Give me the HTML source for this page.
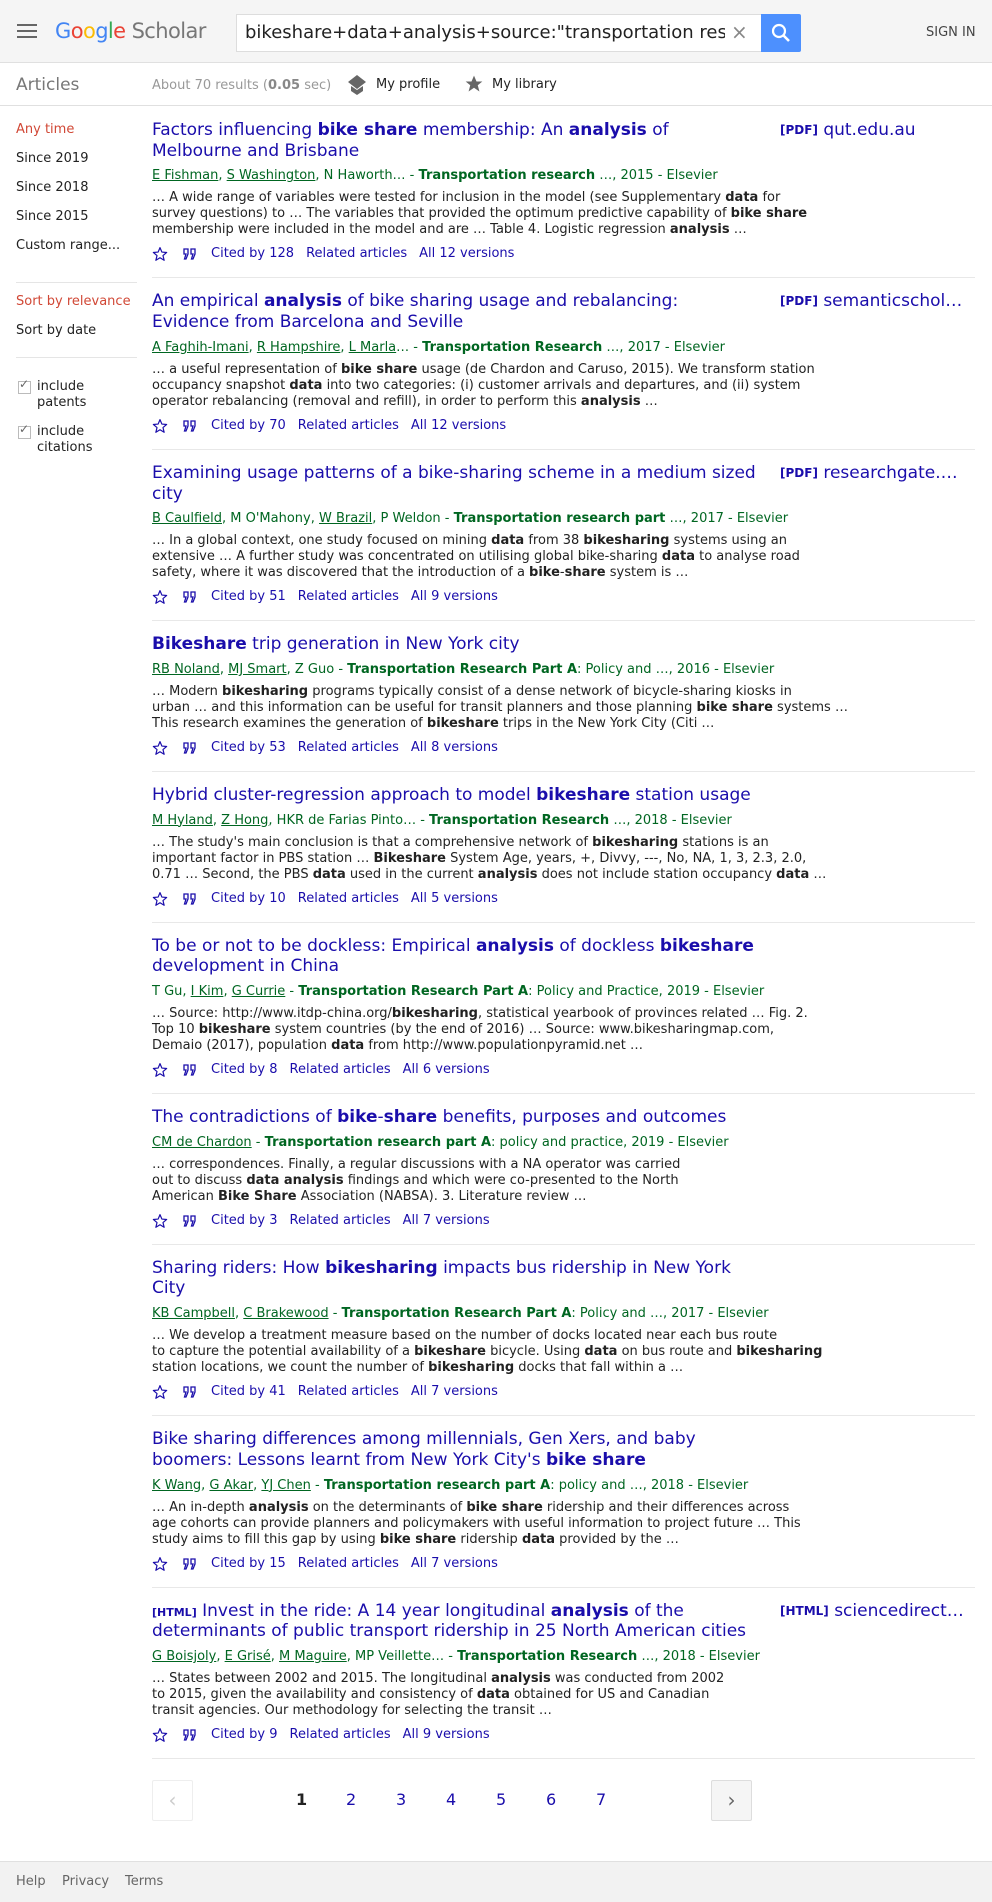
<!DOCTYPE html>
<html><head><meta charset="utf-8">
<style>
*{margin:0;padding:0;box-sizing:border-box}
body{width:992px;height:1902px;position:relative;font-family:"DejaVu Sans","Liberation Sans",sans-serif;background:#fff;color:#222;overflow:hidden}
a{text-decoration:none}
.hdr{position:absolute;left:0;top:0;width:992px;height:63px;background:#f5f5f5;border-bottom:1px solid #e0e0e0}
.ab{position:absolute;white-space:nowrap}
.sub{position:absolute;left:0;top:63px;width:992px;height:43px;border-bottom:1px solid #e0e0e0}
.side{font-size:13px;color:#222}
.main{position:absolute;left:152px;top:107px;width:823px}
.r{padding-top:13px;padding-bottom:13px;border-bottom:1px solid #e8e8e8;position:relative;white-space:nowrap}
.t{font-size:17px;line-height:20.7px;color:#1a0dab}
.t b{font-weight:bold}
.au{font-size:13px;line-height:20px;margin-top:5px;color:#006621}
.au u{text-decoration:underline}
.sn{font-size:13px;line-height:16px;margin-top:4px;color:#222}
.ac{font-size:13px;line-height:20px;margin-top:6px;color:#1a0dab;height:20px;position:relative}
.ac span{margin-right:12px}
.ac svg{position:absolute;top:2px}
.ac .tx{position:absolute;left:59px;top:0}
.pdf{position:absolute;left:628px;top:13px;font-size:17px;line-height:20.7px;color:#1a0dab}
.pdf small{font-size:12px;font-weight:bold;vertical-align:1px}
.tag{font-size:11px;font-weight:bold;color:#1a0dab;line-height:1}
.cb{display:inline-block;width:13px;height:13px;border:1px solid #bbb;position:absolute;left:18px}
</style></head><body>
<div class="hdr">
  <div class="ab" style="left:17px;top:24px;width:20px;height:2px;background:#666;box-shadow:0 6px 0 #666,0 12px 0 #666"></div>
  <div class="ab" style="left:55px;top:16px;font-size:21px;line-height:30px;letter-spacing:-0.6px"><span style="color:#4285f4">G</span><span style="color:#ea4335">o</span><span style="color:#fbbc05">o</span><span style="color:#4285f4">g</span><span style="color:#34a853">l</span><span style="color:#ea4335">e</span> <span style="color:#777">Scholar</span></div>
  <div class="ab" style="left:236px;top:14px;width:526px;height:38px;background:#fff;border:1px solid #ddd;overflow:hidden">
    <div class="ab" style="left:8px;top:7px;font-size:18px;color:#222;width:480px;overflow:hidden">bikeshare+data+analysis+source:"transportation research"</div>
    <div class="ab" style="left:494px;top:5px;font-size:20px;color:#888">×</div>
  </div>
  <div class="ab" style="left:761px;top:14px;width:40px;height:38px;background:#4d90fe;border-radius:0 2px 2px 0">
    <svg width="40" height="38" viewBox="0 0 40 38"><circle cx="18" cy="17" r="6" fill="none" stroke="#fff" stroke-width="2.2"/><line x1="22.5" y1="21.5" x2="28" y2="27" stroke="#fff" stroke-width="2.6"/></svg>
  </div>
  <div class="ab" style="left:926px;top:25px;font-size:13px;color:#444">SIGN IN</div>
</div>
<div class="sub">
  <div class="ab" style="left:16px;top:12px;font-size:17px;color:#777">Articles</div>
  <div class="ab" style="left:152px;top:15px;font-size:13px;color:#999">About 70 results (<b style="color:#888">0.05</b> sec)</div>
  <svg class="ab" style="left:347px;top:11px" width="20" height="22" viewBox="0 0 20 22"><path d="M10 1 L19 8 L10 15 L1 8Z" fill="#666"/><path d="M4 12 L4 17 L10 21 L16 17 L16 12 L10 16Z" fill="#666"/></svg>
  <div class="ab" style="left:376px;top:14px;font-size:13px;color:#222">My profile</div>
  <svg class="ab" style="left:464px;top:11px" width="20" height="20" viewBox="0 0 24 24"><path d="M12 2l3 7h7l-5.5 4.5 2 7.5L12 16.5 5.5 21l2-7.5L2 9h7z" fill="#666"/></svg>
  <div class="ab" style="left:492px;top:14px;font-size:13px;color:#222">My library</div>
</div>
<div class="side">
  <div class="ab" style="left:16px;top:122px;color:#d14836">Any time</div>
  <div class="ab" style="left:16px;top:151px">Since 2019</div>
  <div class="ab" style="left:16px;top:180px">Since 2018</div>
  <div class="ab" style="left:16px;top:209px">Since 2015</div>
  <div class="ab" style="left:16px;top:238px">Custom range...</div>
  <div class="ab" style="left:16px;top:282px;width:121px;height:1px;background:#e5e5e5"></div>
  <div class="ab" style="left:16px;top:294px;color:#d14836">Sort by relevance</div>
  <div class="ab" style="left:16px;top:323px">Sort by date</div>
  <div class="ab" style="left:16px;top:357px;width:121px;height:1px;background:#e5e5e5"></div>
  <span class="cb" style="top:381px"></span><div class="ab" style="left:19px;top:377px;font-size:12px;color:#666">✓</div>
  <div class="ab" style="left:37px;top:379px;line-height:16px">include<br>patents</div>
  <span class="cb" style="top:426px"></span><div class="ab" style="left:19px;top:422px;font-size:12px;color:#666">✓</div>
  <div class="ab" style="left:37px;top:424px;line-height:16px">include<br>citations</div>
</div>
<div class="main">
<div class="r"><div class="t">Factors influencing <b>bike share</b> membership: An <b>analysis</b> of<br>Melbourne and Brisbane</div><div class="pdf"><small>[PDF]</small> qut.edu.au</div>
<div class="au"><u>E Fishman</u>, <u>S Washington</u>, N Haworth… - <b>Transportation research</b> …, 2015 - Elsevier</div>
<div class="sn">… A wide range of variables were tested for inclusion in the model (see Supplementary <b>data</b> for<br>survey questions) to … The variables that provided the optimum predictive capability of <b>bike share</b><br>membership were included in the model and are … Table 4. Logistic regression <b>analysis</b> …</div>
<div class="ac"><svg style="left:0" width="16" height="16" viewBox="0 0 24 24"><path d="M12 2.5l2.8 6.6 7.2.6-5.5 4.7 1.7 7-6.2-3.8-6.2 3.8 1.7-7L2 9.7l7.2-.6z" fill="none" stroke="#1a0dab" stroke-width="1.8" stroke-linejoin="round"/></svg><svg style="left:30px" width="16" height="16" viewBox="0 0 16 16"><path d="M2 3h4v5l-2 5h-1.5l1.5-5H2zM9 3h4v5l-2 5H9.5l1.5-5H9z" fill="none" stroke="#1a0dab" stroke-width="1.3"/></svg><div class="tx"><span>Cited by 128</span><span>Related articles</span><span>All 12 versions</span></div></div></div>

<div class="r"><div class="t">An empirical <b>analysis</b> of bike sharing usage and rebalancing:<br>Evidence from Barcelona and Seville</div><div class="pdf"><small>[PDF]</small> semanticschol…</div>
<div class="au"><u>A Faghih-Imani</u>, <u>R Hampshire</u>, <u>L Marla</u>… - <b>Transportation Research</b> …, 2017 - Elsevier</div>
<div class="sn">… a useful representation of <b>bike share</b> usage (de Chardon and Caruso, 2015). We transform station<br>occupancy snapshot <b>data</b> into two categories: (i) customer arrivals and departures, and (ii) system<br>operator rebalancing (removal and refill), in order to perform this <b>analysis</b> …</div>
<div class="ac"><svg style="left:0" width="16" height="16" viewBox="0 0 24 24"><path d="M12 2.5l2.8 6.6 7.2.6-5.5 4.7 1.7 7-6.2-3.8-6.2 3.8 1.7-7L2 9.7l7.2-.6z" fill="none" stroke="#1a0dab" stroke-width="1.8" stroke-linejoin="round"/></svg><svg style="left:30px" width="16" height="16" viewBox="0 0 16 16"><path d="M2 3h4v5l-2 5h-1.5l1.5-5H2zM9 3h4v5l-2 5H9.5l1.5-5H9z" fill="none" stroke="#1a0dab" stroke-width="1.3"/></svg><div class="tx"><span>Cited by 70</span><span>Related articles</span><span>All 12 versions</span></div></div></div>

<div class="r"><div class="t">Examining usage patterns of a bike-sharing scheme in a medium sized<br>city</div><div class="pdf"><small>[PDF]</small> researchgate.…</div>
<div class="au"><u>B Caulfield</u>, M O'Mahony, <u>W Brazil</u>, P Weldon - <b>Transportation research part</b> …, 2017 - Elsevier</div>
<div class="sn">… In a global context, one study focused on mining <b>data</b> from 38 <b>bikesharing</b> systems using an<br>extensive … A further study was concentrated on utilising global bike-sharing <b>data</b> to analyse road<br>safety, where it was discovered that the introduction of a <b>bike</b>-<b>share</b> system is …</div>
<div class="ac"><svg style="left:0" width="16" height="16" viewBox="0 0 24 24"><path d="M12 2.5l2.8 6.6 7.2.6-5.5 4.7 1.7 7-6.2-3.8-6.2 3.8 1.7-7L2 9.7l7.2-.6z" fill="none" stroke="#1a0dab" stroke-width="1.8" stroke-linejoin="round"/></svg><svg style="left:30px" width="16" height="16" viewBox="0 0 16 16"><path d="M2 3h4v5l-2 5h-1.5l1.5-5H2zM9 3h4v5l-2 5H9.5l1.5-5H9z" fill="none" stroke="#1a0dab" stroke-width="1.3"/></svg><div class="tx"><span>Cited by 51</span><span>Related articles</span><span>All 9 versions</span></div></div></div>

<div class="r"><div class="t"><b>Bikeshare</b> trip generation in New York city</div>
<div class="au"><u>RB Noland</u>, <u>MJ Smart</u>, Z Guo - <b>Transportation Research Part A</b>: Policy and …, 2016 - Elsevier</div>
<div class="sn">… Modern <b>bikesharing</b> programs typically consist of a dense network of bicycle-sharing kiosks in<br>urban … and this information can be useful for transit planners and those planning <b>bike share</b> systems …<br>This research examines the generation of <b>bikeshare</b> trips in the New York City (Citi …</div>
<div class="ac"><svg style="left:0" width="16" height="16" viewBox="0 0 24 24"><path d="M12 2.5l2.8 6.6 7.2.6-5.5 4.7 1.7 7-6.2-3.8-6.2 3.8 1.7-7L2 9.7l7.2-.6z" fill="none" stroke="#1a0dab" stroke-width="1.8" stroke-linejoin="round"/></svg><svg style="left:30px" width="16" height="16" viewBox="0 0 16 16"><path d="M2 3h4v5l-2 5h-1.5l1.5-5H2zM9 3h4v5l-2 5H9.5l1.5-5H9z" fill="none" stroke="#1a0dab" stroke-width="1.3"/></svg><div class="tx"><span>Cited by 53</span><span>Related articles</span><span>All 8 versions</span></div></div></div>

<div class="r"><div class="t">Hybrid cluster-regression approach to model <b>bikeshare</b> station usage</div>
<div class="au"><u>M Hyland</u>, <u>Z Hong</u>, HKR de Farias Pinto… - <b>Transportation Research</b> …, 2018 - Elsevier</div>
<div class="sn">… The study's main conclusion is that a comprehensive network of <b>bikesharing</b> stations is an<br>important factor in PBS station … <b>Bikeshare</b> System Age, years, +, Divvy, ---, No, NA, 1, 3, 2.3, 2.0,<br>0.71 … Second, the PBS <b>data</b> used in the current <b>analysis</b> does not include station occupancy <b>data</b> …</div>
<div class="ac"><svg style="left:0" width="16" height="16" viewBox="0 0 24 24"><path d="M12 2.5l2.8 6.6 7.2.6-5.5 4.7 1.7 7-6.2-3.8-6.2 3.8 1.7-7L2 9.7l7.2-.6z" fill="none" stroke="#1a0dab" stroke-width="1.8" stroke-linejoin="round"/></svg><svg style="left:30px" width="16" height="16" viewBox="0 0 16 16"><path d="M2 3h4v5l-2 5h-1.5l1.5-5H2zM9 3h4v5l-2 5H9.5l1.5-5H9z" fill="none" stroke="#1a0dab" stroke-width="1.3"/></svg><div class="tx"><span>Cited by 10</span><span>Related articles</span><span>All 5 versions</span></div></div></div>

<div class="r"><div class="t">To be or not to be dockless: Empirical <b>analysis</b> of dockless <b>bikeshare</b><br>development in China</div>
<div class="au">T Gu, <u>I Kim</u>, <u>G Currie</u> - <b>Transportation Research Part A</b>: Policy and Practice, 2019 - Elsevier</div>
<div class="sn">… Source: http://www.itdp-china.org/<b>bikesharing</b>, statistical yearbook of provinces related … Fig. 2.<br>Top 10 <b>bikeshare</b> system countries (by the end of 2016) … Source: www.bikesharingmap.com,<br>Demaio (2017), population <b>data</b> from http://www.populationpyramid.net …</div>
<div class="ac"><svg style="left:0" width="16" height="16" viewBox="0 0 24 24"><path d="M12 2.5l2.8 6.6 7.2.6-5.5 4.7 1.7 7-6.2-3.8-6.2 3.8 1.7-7L2 9.7l7.2-.6z" fill="none" stroke="#1a0dab" stroke-width="1.8" stroke-linejoin="round"/></svg><svg style="left:30px" width="16" height="16" viewBox="0 0 16 16"><path d="M2 3h4v5l-2 5h-1.5l1.5-5H2zM9 3h4v5l-2 5H9.5l1.5-5H9z" fill="none" stroke="#1a0dab" stroke-width="1.3"/></svg><div class="tx"><span>Cited by 8</span><span>Related articles</span><span>All 6 versions</span></div></div></div>

<div class="r"><div class="t">The contradictions of <b>bike</b>-<b>share</b> benefits, purposes and outcomes</div>
<div class="au"><u>CM de Chardon</u> - <b>Transportation research part A</b>: policy and practice, 2019 - Elsevier</div>
<div class="sn">… correspondences. Finally, a regular discussions with a NA operator was carried<br>out to discuss <b>data analysis</b> findings and which were co-presented to the North<br>American <b>Bike Share</b> Association (NABSA). 3. Literature review …</div>
<div class="ac"><svg style="left:0" width="16" height="16" viewBox="0 0 24 24"><path d="M12 2.5l2.8 6.6 7.2.6-5.5 4.7 1.7 7-6.2-3.8-6.2 3.8 1.7-7L2 9.7l7.2-.6z" fill="none" stroke="#1a0dab" stroke-width="1.8" stroke-linejoin="round"/></svg><svg style="left:30px" width="16" height="16" viewBox="0 0 16 16"><path d="M2 3h4v5l-2 5h-1.5l1.5-5H2zM9 3h4v5l-2 5H9.5l1.5-5H9z" fill="none" stroke="#1a0dab" stroke-width="1.3"/></svg><div class="tx"><span>Cited by 3</span><span>Related articles</span><span>All 7 versions</span></div></div></div>

<div class="r"><div class="t">Sharing riders: How <b>bikesharing</b> impacts bus ridership in New York<br>City</div>
<div class="au"><u>KB Campbell</u>, <u>C Brakewood</u> - <b>Transportation Research Part A</b>: Policy and …, 2017 - Elsevier</div>
<div class="sn">… We develop a treatment measure based on the number of docks located near each bus route<br>to capture the potential availability of a <b>bikeshare</b> bicycle. Using <b>data</b> on bus route and <b>bikesharing</b><br>station locations, we count the number of <b>bikesharing</b> docks that fall within a …</div>
<div class="ac"><svg style="left:0" width="16" height="16" viewBox="0 0 24 24"><path d="M12 2.5l2.8 6.6 7.2.6-5.5 4.7 1.7 7-6.2-3.8-6.2 3.8 1.7-7L2 9.7l7.2-.6z" fill="none" stroke="#1a0dab" stroke-width="1.8" stroke-linejoin="round"/></svg><svg style="left:30px" width="16" height="16" viewBox="0 0 16 16"><path d="M2 3h4v5l-2 5h-1.5l1.5-5H2zM9 3h4v5l-2 5H9.5l1.5-5H9z" fill="none" stroke="#1a0dab" stroke-width="1.3"/></svg><div class="tx"><span>Cited by 41</span><span>Related articles</span><span>All 7 versions</span></div></div></div>

<div class="r"><div class="t">Bike sharing differences among millennials, Gen Xers, and baby<br>boomers: Lessons learnt from New York City's <b>bike share</b></div>
<div class="au"><u>K Wang</u>, <u>G Akar</u>, <u>YJ Chen</u> - <b>Transportation research part A</b>: policy and …, 2018 - Elsevier</div>
<div class="sn">… An in-depth <b>analysis</b> on the determinants of <b>bike share</b> ridership and their differences across<br>age cohorts can provide planners and policymakers with useful information to project future … This<br>study aims to fill this gap by using <b>bike share</b> ridership <b>data</b> provided by the …</div>
<div class="ac"><svg style="left:0" width="16" height="16" viewBox="0 0 24 24"><path d="M12 2.5l2.8 6.6 7.2.6-5.5 4.7 1.7 7-6.2-3.8-6.2 3.8 1.7-7L2 9.7l7.2-.6z" fill="none" stroke="#1a0dab" stroke-width="1.8" stroke-linejoin="round"/></svg><svg style="left:30px" width="16" height="16" viewBox="0 0 16 16"><path d="M2 3h4v5l-2 5h-1.5l1.5-5H2zM9 3h4v5l-2 5H9.5l1.5-5H9z" fill="none" stroke="#1a0dab" stroke-width="1.3"/></svg><div class="tx"><span>Cited by 15</span><span>Related articles</span><span>All 7 versions</span></div></div></div>

<div class="r"><div class="t"><span class="tag">[HTML]</span> Invest in the ride: A 14 year longitudinal <b>analysis</b> of the<br>determinants of public transport ridership in 25 North American cities</div><div class="pdf"><small>[HTML]</small> sciencedirect…</div>
<div class="au"><u>G Boisjoly</u>, <u>E Grisé</u>, <u>M Maguire</u>, MP Veillette… - <b>Transportation Research</b> …, 2018 - Elsevier</div>
<div class="sn">… States between 2002 and 2015. The longitudinal <b>analysis</b> was conducted from 2002<br>to 2015, given the availability and consistency of <b>data</b> obtained for US and Canadian<br>transit agencies. Our methodology for selecting the transit …</div>
<div class="ac"><svg style="left:0" width="16" height="16" viewBox="0 0 24 24"><path d="M12 2.5l2.8 6.6 7.2.6-5.5 4.7 1.7 7-6.2-3.8-6.2 3.8 1.7-7L2 9.7l7.2-.6z" fill="none" stroke="#1a0dab" stroke-width="1.8" stroke-linejoin="round"/></svg><svg style="left:30px" width="16" height="16" viewBox="0 0 16 16"><path d="M2 3h4v5l-2 5h-1.5l1.5-5H2zM9 3h4v5l-2 5H9.5l1.5-5H9z" fill="none" stroke="#1a0dab" stroke-width="1.3"/></svg><div class="tx"><span>Cited by 9</span><span>Related articles</span><span>All 9 versions</span></div></div></div>
</div>

<div class="ab" style="left:152px;top:1780px;width:41px;height:41px;border:1px solid #eee;border-radius:2px;color:#ccc;font-size:20px;text-align:center;line-height:38px">‹</div>
<div class="ab" style="left:711px;top:1780px;width:41px;height:41px;border:1px solid #ddd;background:#f5f5f5;border-radius:2px;color:#666;font-size:20px;text-align:center;line-height:38px">›</div>
<div class="ab" style="top:1790px;font-size:16px;left:296px;color:#222;font-weight:bold">1</div>
<div class="ab" style="top:1790px;font-size:16px;left:346px;color:#1a0dab">2</div>
<div class="ab" style="top:1790px;font-size:16px;left:396px;color:#1a0dab">3</div>
<div class="ab" style="top:1790px;font-size:16px;left:446px;color:#1a0dab">4</div>
<div class="ab" style="top:1790px;font-size:16px;left:496px;color:#1a0dab">5</div>
<div class="ab" style="top:1790px;font-size:16px;left:546px;color:#1a0dab">6</div>
<div class="ab" style="top:1790px;font-size:16px;left:596px;color:#1a0dab">7</div>

<div class="ab" style="left:0;top:1861px;width:992px;height:41px;background:#f2f2f2;border-top:1px solid #e0e0e0">
  <div class="ab" style="left:16px;top:12px;font-size:13px;color:#666">Help</div>
  <div class="ab" style="left:62px;top:12px;font-size:13px;color:#666">Privacy</div>
  <div class="ab" style="left:125px;top:12px;font-size:13px;color:#666">Terms</div>
</div>
</body></html>
